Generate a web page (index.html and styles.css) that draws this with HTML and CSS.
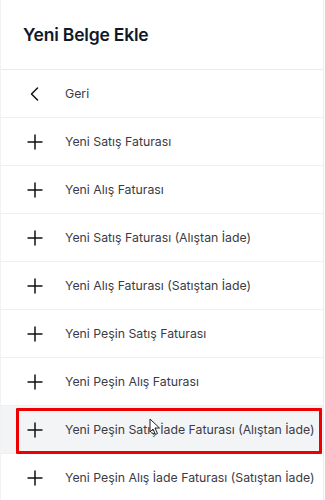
FILE: index.html
```
<!DOCTYPE html>
<html lang="tr">
<head>
<meta charset="utf-8">
<link rel="stylesheet" href="styles.css">
</head>
<body>
<div class="panel">
  <div class="header"><h1 class="title">Yeni Belge Ekle</h1></div>
  <ul class="list">
    <li class="row"><span class="icon"><svg width="16" height="16" viewBox="0 0 16 16"><path d="M10.5 2 L4.5 8 L10.5 14" fill="none" stroke="#111" stroke-width="1.5" stroke-linecap="round" stroke-linejoin="round"/></svg></span><span class="label">Geri</span></li>
    <li class="row"><span class="icon"><svg width="16" height="16" viewBox="0 0 16 16"><path d="M8 0.5 V15.5 M0.5 8 H15.5" fill="none" stroke="#111" stroke-width="1.5"/></svg></span><span class="label">Yeni Satış Faturası</span></li>
    <li class="row"><span class="icon"><svg width="16" height="16" viewBox="0 0 16 16"><path d="M8 0.5 V15.5 M0.5 8 H15.5" fill="none" stroke="#111" stroke-width="1.5"/></svg></span><span class="label">Yeni Alış Faturası</span></li>
    <li class="row"><span class="icon"><svg width="16" height="16" viewBox="0 0 16 16"><path d="M8 0.5 V15.5 M0.5 8 H15.5" fill="none" stroke="#111" stroke-width="1.5"/></svg></span><span class="label">Yeni Satış Faturası (Alıştan İade)</span></li>
    <li class="row"><span class="icon"><svg width="16" height="16" viewBox="0 0 16 16"><path d="M8 0.5 V15.5 M0.5 8 H15.5" fill="none" stroke="#111" stroke-width="1.5"/></svg></span><span class="label">Yeni Alış Faturası (Satıştan İade)</span></li>
    <li class="row"><span class="icon"><svg width="16" height="16" viewBox="0 0 16 16"><path d="M8 0.5 V15.5 M0.5 8 H15.5" fill="none" stroke="#111" stroke-width="1.5"/></svg></span><span class="label">Yeni Peşin Satış Faturası</span></li>
    <li class="row"><span class="icon"><svg width="16" height="16" viewBox="0 0 16 16"><path d="M8 0.5 V15.5 M0.5 8 H15.5" fill="none" stroke="#111" stroke-width="1.5"/></svg></span><span class="label">Yeni Peşin Alış Faturası</span></li>
    <li class="row row-active"><span class="highlight"></span><span class="icon"><svg width="16" height="16" viewBox="0 0 16 16"><path d="M8 0.5 V15.5 M0.5 8 H15.5" fill="none" stroke="#111" stroke-width="1.5"/></svg></span><span class="label">Yeni Peşin Satış İade Faturası (Alıştan İade)</span><svg class="cursor" width="12" height="18" viewBox="0 0 12 18"><path d="M1 1 L1 14 L4 11 L6.5 16.5 L8.5 15.5 L6 10 L10.5 10 Z" fill="#fff" stroke="#222" stroke-width="1" stroke-linejoin="round"/></svg></li>
    <li class="row"><span class="icon"><svg width="16" height="16" viewBox="0 0 16 16"><path d="M8 0.5 V15.5 M0.5 8 H15.5" fill="none" stroke="#111" stroke-width="1.5"/></svg></span><span class="label">Yeni Peşin Alış İade Faturası (Satıştan İade)</span></li>
  </ul>
</div>
</body>
</html>
```
FILE: styles.css
```
* { box-sizing: border-box; }
html, body { margin: 0; padding: 0; background: #fff; }
body { font-family: Inter, "Noto Sans", sans-serif; width: 325px; height: 500px; overflow: hidden; }
.panel { width: 324px; border-right: 1px solid #ececec; border-left: 1px solid #f2f2f2; min-height: 500px; }
.header { height: 70px; border-bottom: 1px solid #ebebeb; display: flex; align-items: center; padding-left: 22px; }
.title { margin: 0; font-size: 17.5px; font-weight: 600; color: #111827; letter-spacing: -0.2px; }
.list { list-style: none; margin: 0; padding: 0; }
.row { position: relative; height: 48px; border-bottom: 1px solid #efefef; display: flex; align-items: center; padding-left: 26px; }
.row-active { background: #f3f4f6; }
.icon { width: 16px; height: 16px; display: flex; margin-right: 22px; }
.label { font-size: 12.3px; color: #3b3b45; white-space: nowrap; }
.highlight { position: absolute; left: 15px; right: 1px; top: 2px; bottom: -1px; border: 3px solid #ee0000; border-radius: 1px; pointer-events: none; }
.cursor { position: absolute; left: 148px; top: 12px; }
```
